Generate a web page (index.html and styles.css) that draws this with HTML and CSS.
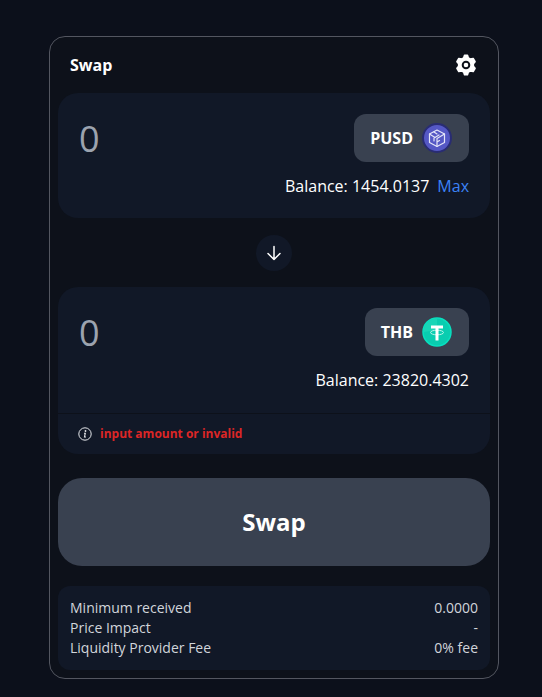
FILE: index.html
```html
<!DOCTYPE html>
<html lang="en">
<head>
<meta charset="utf-8">
<meta name="viewport" content="width=device-width, initial-scale=1">
<title>Swap</title>
<link rel="stylesheet" href="styles.css">
</head>
<body>
<main class="card">
  <header class="card-header">
    <h1 class="title">Swap</h1>
    <button class="icon-button" type="button" aria-label="Settings">
      <svg width="24" height="24" viewBox="0 0 24 24" aria-hidden="true">
        <path fill="#fff" stroke="#fff" stroke-width="1.500" stroke-linejoin="round" d="M10.500 2.300h3l.8 2.500 2 1.200 2.900-.6 1.900 3.300-1.700 2v2.600l1.700 2-1.900 3.300-2.900-.6-2 1.200-.8 2.500h-3l-.8-2.500-2-1.200-2.900.6-1.900-3.300 1.700-2v-2.600l-1.700-2 1.900-3.300 2.900.6 2-1.200z"/>
        <circle cx="12" cy="12" r="3.300" fill="#fff" stroke="#0d111a" stroke-width="2"/>
      </svg>
    </button>
  </header>

  <section class="panel">
    <div class="panel-body">
      <div class="row">
        <input class="amount" type="text" inputmode="decimal" placeholder="0" aria-label="Amount to pay">
        <button class="token" type="button">PUSD
          <svg width="32" height="32" viewBox="0 0 32 32" aria-hidden="true">
            <circle cx="16" cy="16" r="14" fill="#5558c5" stroke="#292c73" stroke-width="2"/>
            <g fill="none" stroke="#e4e5f8" stroke-width="1.200" stroke-linejoin="round" stroke-linecap="round">
              <path d="M16 8l7.500 4v8.500L16 24.500l-7.500-4V12z"/>
              <path d="M8.500 12L14 15.500M23.500 12L16 16.500v8M13 10l3 2M14 15.500l4-2.500M13 16v3M16 20l2.500-1.500"/>
            </g>
          </svg>
        </button>
      </div>
      <p class="balance">Balance: 1454.0137 <button class="max" type="button">Max</button></p>
    </div>
  </section>

  <button class="switch" type="button" aria-label="Switch tokens">
    <svg width="16" height="16" viewBox="0 0 16 16" fill="none" stroke="#fff" stroke-width="1.500" stroke-linecap="round" stroke-linejoin="round" aria-hidden="true">
      <path d="M8 1.500v13M2 8.500l6 6 6-6"/>
    </svg>
  </button>

  <section class="panel">
    <div class="panel-body panel-body-main">
      <div class="row">
        <input class="amount" type="text" inputmode="decimal" placeholder="0" aria-label="Amount to receive">
        <button class="token" type="button">THB
          <svg width="32" height="32" viewBox="0 0 32 32" aria-hidden="true">
            <circle cx="16" cy="16" r="14" fill="#09cdb0" stroke="#08e0bf" stroke-width="1.500"/>
            <path fill="#18d5b7" d="M16 2.500A13.500 13.500 0 0 0 2.500 16L16 14z"/>
            <ellipse cx="16" cy="16.500" rx="6.500" ry="2.300" fill="none" stroke="#b8f5e9" stroke-width="1"/>
            <path fill="#fff" d="M10 9.500h12v3h-4.500v12h-3v-12H10z"/>
          </svg>
        </button>
      </div>
      <p class="balance">Balance: 23820.4302</p>
    </div>
    <p class="notice" role="alert">
      <svg width="14" height="14" viewBox="0 0 14 14" aria-hidden="true">
        <circle cx="7" cy="7" r="6.200" fill="none" stroke="#e5e7eb" stroke-width="1"/>
        <circle cx="7.500" cy="4" r=".9" fill="#e5e7eb"/>
        <path d="M6 6.200h1.300L6.500 10H8" fill="none" stroke="#e5e7eb" stroke-width="1.100"/>
      </svg>
      input amount or invalid
    </p>
  </section>

  <button class="submit" type="button">Swap</button>

  <dl class="details">
    <div class="detail"><dt>Minimum received</dt><dd>0.0000</dd></div>
    <div class="detail"><dt>Price Impact</dt><dd>-</dd></div>
    <div class="detail"><dt>Liquidity Provider Fee</dt><dd>0% fee</dd></div>
  </dl>
</main>
</body>
</html>
```

FILE: styles.css
```css
* {
  box-sizing: border-box;
}

body {
  margin: 0;
  padding: 36px 43px 18px 49px;
  background: #0c101b;
  color: #fff;
  font: 16px/24px "Open Sans", "Noto Sans", sans-serif;
}

h1, p, dl, dd {
  margin: 0;
}

button, input {
  border: 0;
  padding: 0;
  background: none;
  color: inherit;
  font: inherit;
}

button {
  cursor: pointer;
}

svg {
  display: block;
  flex: none;
}

.card {
  max-width: 450px;
  margin: 0 auto;
  padding: 0 8px 8px;
  border: 1px solid #535660;
  border-radius: 16px;
  background: #0d111a;
}

.card-header {
  display: flex;
  align-items: center;
  justify-content: space-between;
  padding: 16px 12px;
}

.title {
  font-size: 16px;
  font-weight: 700;
}

.panel {
  border-radius: 20px;
  background: #111827;
}

.panel-body {
  padding: 21px 21px 20px;
}

.panel-body-main {
  padding-bottom: 21px;
}

.row {
  display: flex;
  align-items: center;
  justify-content: space-between;
  gap: 16px;
}

.amount {
  flex: 1;
  min-width: 0;
  height: 48px;
  font-size: 36px;
}

.amount::placeholder {
  color: #9ca3af;
  opacity: 1;
}

.token {
  display: flex;
  align-items: center;
  gap: 8px;
  padding: 8px 16px;
  border-radius: 12px;
  background: #394150;
  font-weight: 700;
}

.balance {
  display: flex;
  justify-content: flex-end;
  gap: 8px;
  margin-top: 12px;
}

.max {
  color: #3b82f6;
}

.switch {
  display: grid;
  place-items: center;
  width: 36px;
  height: 36px;
  margin: 17px auto 16px;
  border-radius: 50%;
  background: #111827;
}

.notice {
  display: flex;
  align-items: center;
  gap: 8px;
  padding: 8px 20px;
  border-top: 1px solid #0d111a;
  color: #dc2626;
  font-size: 12px;
  font-weight: 700;
}

.submit {
  display: block;
  width: 100%;
  margin: 24px 0 20px;
  padding: 28px;
  border-radius: 24px;
  background: #394150;
  font-size: 24px;
  font-weight: 700;
  line-height: 32px;
}

.details {
  padding: 12px;
  border-radius: 12px;
  background: #111827;
  color: #d1d5db;
  font-size: 14px;
  line-height: 20px;
}

.detail {
  display: flex;
  justify-content: space-between;
}
```
